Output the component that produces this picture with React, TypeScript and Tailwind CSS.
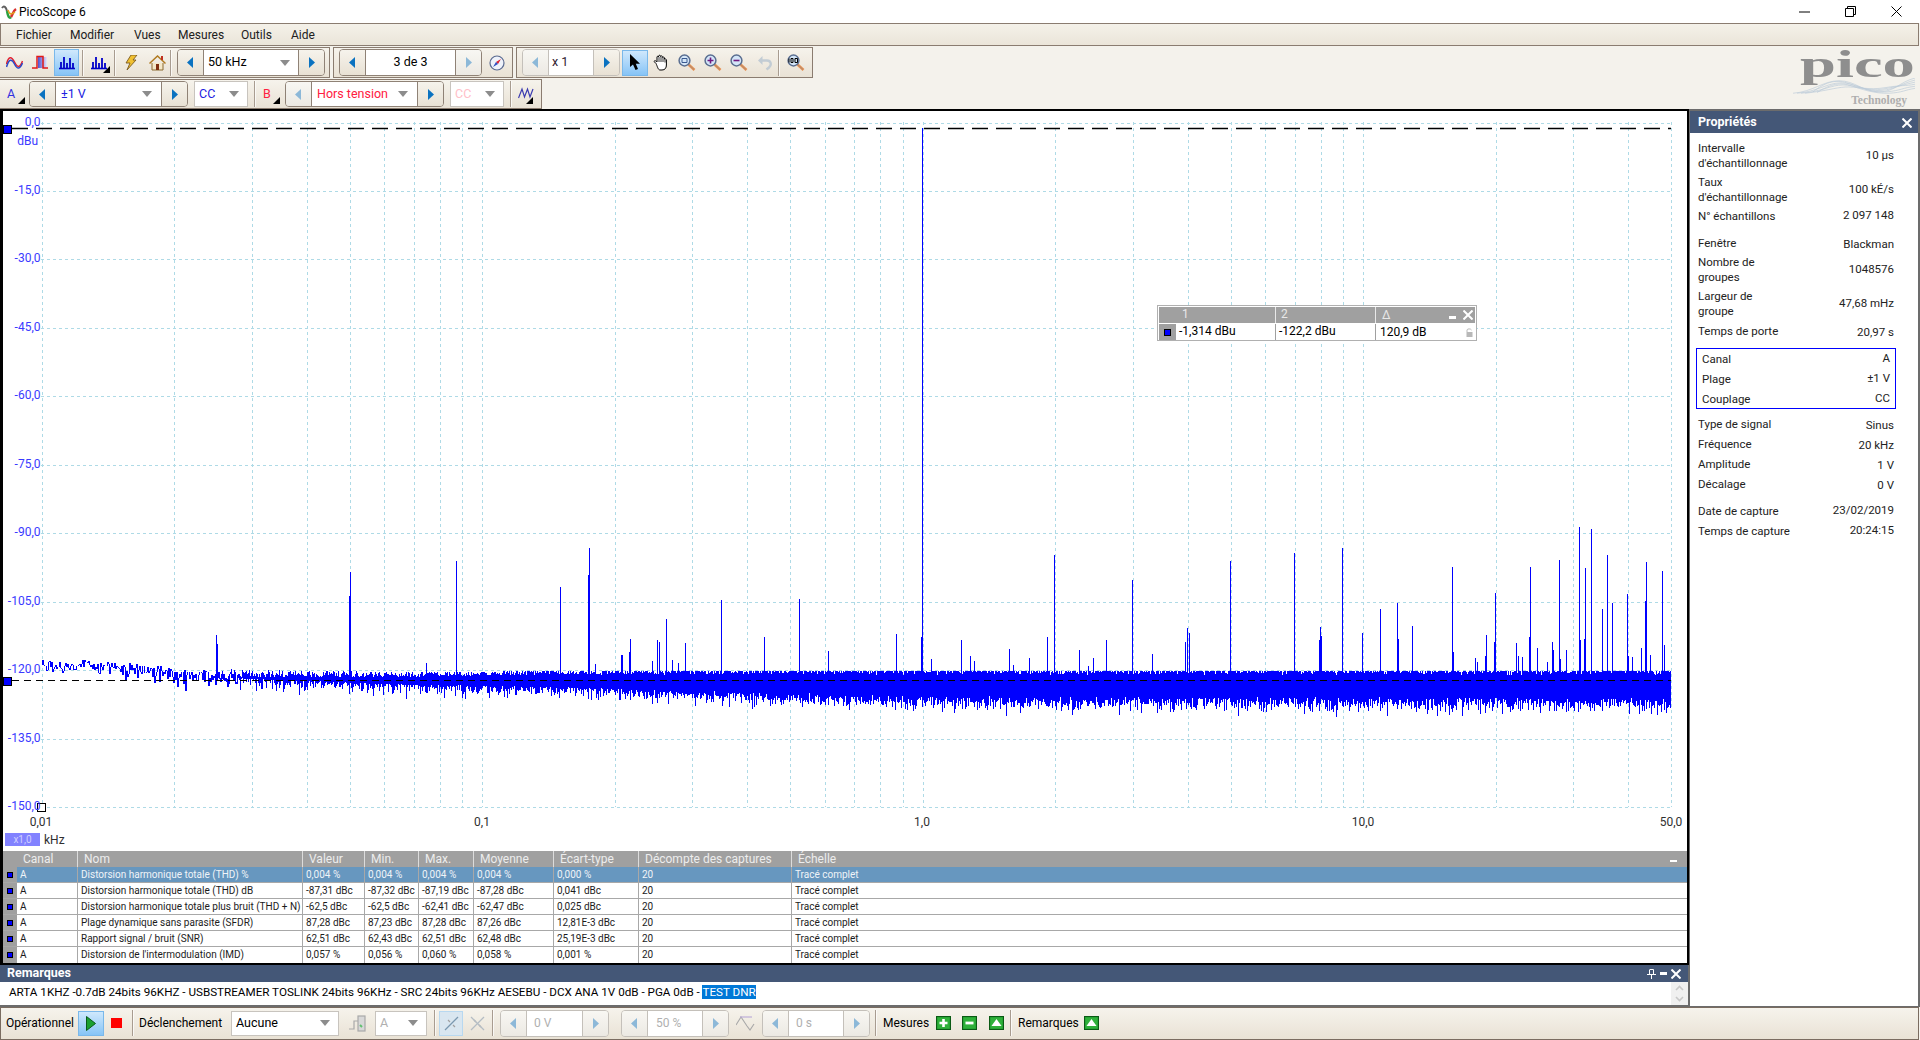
import React from "react";

/* ---------- chart data ---------- */
const lerp = (pts: number[][], x: number) => {
  if (x <= pts[0][0]) return pts[0][1];
  for (let i = 1; i < pts.length; i++) {
    if (x <= pts[i][0]) {
      const [a, b] = pts[i - 1];
      const [c, d] = pts[i];
      return b + ((d - b) * (x - a)) / (c - a);
    }
  }
  return pts[pts.length - 1][1];
};
let seed = 12345;
const rnd = () => {
  seed = (seed * 1664525 + 1013904223) % 4294967296;
  return seed / 4294967296;
};
const gauss = () => (rnd() + rnd() + rnd() + rnd() - 2) * 1.73;
const centre = [[42, 665], [100, 666], [130, 669], [200, 675], [250, 678], [400, 680], [560, 680], [750, 682], [1000, 684], [1670, 684]];
const sigma = [[42, 4], [200, 4.8], [250, 4.5], [400, 4.6], [560, 5], [750, 6.5], [920, 7.3], [1670, 7.6]];
const count = [[42, 1], [200, 1], [250, 3], [400, 8], [560, 20], [750, 35], [920, 45], [1670, 50]];
const minUp = [[250, 1], [400, 4], [560, 6.5], [750, 9], [920, 10], [1670, 11]];
const minDown = [[250, 1], [400, 5], [560, 8], [750, 12], [920, 14.5], [1670, 16]];
let noise = "";
let prev = 665;
for (let x = 42; x <= 1670; x++) {
  const c = lerp(centre, x);
  const s = lerp(sigma, x);
  const n = Math.round(lerp(count, x));
  let lo = prev;
  let hi = prev;
  let last = prev;
  if (n > 2) {
    lo = c - lerp(minUp, x) * (0.8 + 0.2 * rnd());
    hi = c + lerp(minDown, x) * (0.85 + 0.15 * rnd());
  }
  for (let i = 0; i < n; i++) {
    let u = gauss();
    if (u < 0) u = Math.max(u * 0.85, -1.75);
    else u = u * (1 + u * 0.12);
    last = c + u * s;
    lo = Math.min(lo, last);
    hi = Math.max(hi, last);
  }
  noise += `M${x}.5 ${Math.round(lo)}V${Math.round(hi)}`;
  prev = last;
}
const spikes = [
  [216, 635], [217, 644], [349, 596], [350, 572], [456, 561], [560, 587], [588, 575], [589, 548], [622, 655], [621, 655],
  [630, 639], [629, 652], [657, 640], [659, 642], [666, 619], [685, 643], [721, 600], [595, 664], [426, 663], [672, 660], [678, 663], [652, 661],
  [764, 637], [799, 599], [828, 651], [896, 634], [921, 637], [922, 128], [931, 659], [961, 640], [970, 656], [974, 661], [1009, 649],
  [1013, 665], [1029, 658], [1047, 637], [1054, 555], [1079, 650], [1088, 666], [1093, 658], [1106, 640], [1132, 580], [1152, 654], [1185, 642],
  [1187, 628], [1189, 633], [1230, 561], [1294, 553],
  [1320, 627], [1319, 640], [1321, 636], [1342, 548], [1362, 633], [1380, 609], [1397, 603], [1398, 639], [1412, 626], [1452, 567], [1453, 652],
  [1475, 658], [1477, 662], [1486, 635], [1485, 656], [1495, 593], [1494, 642], [1516, 643], [1518, 656], [1522, 657], [1530, 567], [1529, 637],
  [1537, 648], [1547, 662], [1552, 642], [1553, 650], [1559, 560], [1560, 659], [1566, 650], [1579, 527], [1580, 640], [1585, 568], [1584, 639],
  [1591, 529], [1602, 609], [1607, 555], [1612, 603], [1627, 594], [1628, 656], [1632, 657], [1641, 648], [1646, 562], [1645, 601], [1650, 655],
  [1662, 571], [1664, 645],
];
const spikePath = spikes.map(([x, y]) => `M${x}.5 ${y}V680`).join("");
const logX = (f: number) => 41.7 + 440.5 * Math.log10(f / 0.01);
const vGrid: number[] = [];
for (const d of [0.01, 0.1, 1, 10]) {
  for (let m = 1; m < 10; m++) {
    const f = d * m;
    if (f <= 50.0001) vGrid.push(Math.round(logX(f)));
  }
}
const hVals = ["0,0", "-15,0", "-30,0", "-45,0", "-60,0", "-75,0", "-90,0", "-105,0", "-120,0", "-135,0", "-150,0"];
const hY = hVals.map((_, i) => Math.round(122.5 + i * 68.45));

/* ---------- small drawings ---------- */
const Tri = ({ left, off }: { left?: boolean; off?: boolean }) => (
  <svg width="7" height="11" viewBox="0 0 7 11">
    <path d={left ? "M6 0V11L0 5.5Z" : "M1 0V11L7 5.5Z"} fill={off ? "#8cb8d8" : "#0a72c0"} />
  </svg>
);
const Caret = () => (
  <svg width="10" height="6" viewBox="0 0 10 6">
    <path d="M0 0H10L5 6Z" fill="#8c8c8c" />
  </svg>
);
const Corner = () => (
  <svg width="7" height="7" viewBox="0 0 7 7" className="shrink-0">
    <path d="M7 0V7H0Z" fill="#000" />
  </svg>
);
const Sep = () => <div className="w-[2px] h-[26px] border-l border-[#a89c90] bg-white/70 shrink-0" />;

const StepBtn = ({ left, off }: { left?: boolean; off?: boolean }) => (
  <div className={`w-[25px] shrink-0 flex items-center justify-center bg-linear-to-b ${off ? "from-[#f8f7f3] to-[#ece9e3]" : "from-[#f6f3ec] to-[#e8e1d4]"}`}>
    <Tri left={left} off={off} />
  </div>
);

const Sine = () => (
  <svg width="17" height="13" viewBox="0 0 17 13" fill="none" strokeWidth="1.5">
    <path d="M0.5 8C2.5 0 5.5 0 8.5 6S14 12 16.5 5" stroke="#e02030" />
    <path d="M0.5 11C3 3 5.5 2 8.5 8S14 13 16.5 7" stroke="#2848c8" />
  </svg>
);
const Pulse = () => (
  <svg width="18" height="15" viewBox="0 0 18 15" fill="none">
    <rect x="6" y="2" width="9" height="11" fill="url(#pg)" />
    <defs>
      <linearGradient id="pg" x1="0" x2="1" y1="0" y2="0">
        <stop offset="0" stopColor="#5050d0" />
        <stop offset="1" stopColor="#e8e8f8" />
      </linearGradient>
    </defs>
    <path d="M0 13H5V1.5H11V13H16" stroke="#e01818" strokeWidth="1.5" />
  </svg>
);
const Bars = ({ color = "#0000c8" }: { color?: string }) => (
  <svg width="16" height="15" viewBox="0 0 16 15">
    <path d="M0 13.5H16" stroke={color} strokeWidth="1.6" />
    <path d="M2 13V7M5 13V2M8 13V8M11 13V3M14 13V8" stroke={color} strokeWidth="1.8" />
  </svg>
);
const Bolt = () => (
  <svg width="14" height="16" viewBox="0 0 14 16">
    <path d="M7 0H13L9 5H12L3 15L6 8H2Z" fill="#f0c030" stroke="#7a5a20" strokeWidth="0.9" />
  </svg>
);
const Home = () => (
  <svg width="17" height="16" viewBox="0 0 17 16">
    <path d="M3 8V15H14V8" fill="#f4e8c8" stroke="#8a6a30" />
    <path d="M0.5 8.5L8.5 1L16.5 8.5" fill="none" stroke="#b07a20" strokeWidth="1.5" />
    <rect x="12" y="1" width="2" height="4" fill="#c03020" />
    <rect x="7" y="9" width="3" height="6" fill="#803010" />
  </svg>
);
const Compass = () => (
  <svg width="16" height="16" viewBox="0 0 16 16">
    <circle cx="8" cy="8" r="7" fill="#eef2fa" stroke="#5a6a90" strokeWidth="1.2" />
    <path d="M12 4L9 9L7 7Z" fill="#e02030" />
    <path d="M4 12L7 7L9 9Z" fill="#3050c0" />
  </svg>
);
const Arrow = () => (
  <svg width="12" height="17" viewBox="0 0 12 17">
    <path d="M1 0V13L4 10.5L6.5 16L9 15L6.8 9.8H11Z" fill="#000" />
  </svg>
);
const Hand = () => (
  <svg width="17" height="17" viewBox="0 0 17 17">
    <path
      d="M3 9.5L1 7.5C2 6 3 7 4 8V3C4 2 5.5 2 5.6 3V2C5.8 1 7.4 1 7.5 2V2.5C7.8 1.6 9.4 1.6 9.5 3V3.5C10 2.8 11.4 3 11.5 4V5.3C12.2 4.7 13.4 5 13.4 6V11C13.4 14 12 16 9 16H7C5 16 4.3 12 3 9.5Z"
      fill="#fff"
      stroke="#000"
      strokeWidth="1"
    />
    <path d="M6 3V8M8 3V8M10 4V8M12 6V8.5" stroke="#000" strokeWidth="0.8" />
  </svg>
);
const Mag = ({ glyph, off }: { glyph: "fit" | "plus" | "minus" | "100"; off?: boolean }) => (
  <svg width="18" height="17" viewBox="0 0 18 17" fill="none">
    <path d="M10.5 10.5L16.5 16" stroke="#e89050" strokeWidth="2.6" />
    <path d="M10.5 10.5L16 15.5" stroke="#8a8a8a" strokeWidth="0.7" />
    <circle cx="6.5" cy="6.5" r="5.4" fill="#d4e6f8" stroke={off ? "#a0a0a0" : "#5a6e90"} strokeWidth="1.5" />
    {glyph === "plus" && <path d="M3.5 6.5H9.5M6.5 3.5V9.5" stroke="#701880" strokeWidth="1.6" />}
    {glyph === "minus" && <path d="M3.5 6.5H9.5" stroke="#701880" strokeWidth="1.6" />}
    {glyph === "fit" && <path d="M4 4.5H9V8.5H4Z" stroke="#3a5a90" strokeWidth="1" />}
    {glyph === "100" && <path d="M2 4.5V8.5M4 4.5H6V8.5H4ZM8 4.5H10.5V8.5H8Z" stroke="#000" strokeWidth="1" />}
  </svg>
);
const Undo = () => (
  <svg width="16" height="16" viewBox="0 0 16 16" fill="none">
    <path d="M4 5.5H10C14 5.5 15 10 12 12.5L9.5 14.5" stroke="#c2ccd4" strokeWidth="2.4" />
    <path d="M5.5 1L1 5.5L5.5 10Z" fill="#c2ccd4" />
  </svg>
);
const Waves = () => (
  <svg width="17" height="15" viewBox="0 0 17 15" fill="none">
    <path d="M0.5 11L4 2L6.5 10L9.5 2L12 10L15 2" stroke="#3a3ab0" strokeWidth="1.2" />
  </svg>
);
const Sq = ({ glyph }: { glyph: "plus" | "minus" | "up" }) => (
  <svg width="15" height="14" viewBox="0 0 15 14">
    <rect x="0.5" y="0.5" width="14" height="13" fill="#1f9a2c" stroke="#0a5a14" />
    <rect x="1.5" y="1.5" width="12" height="11" fill="#2fb03a" />
    {glyph === "plus" && <path d="M3.5 7H11.5M7.5 3V11" stroke="#fff" strokeWidth="2.6" />}
    {glyph === "minus" && <path d="M3.5 7H11.5" stroke="#fff" strokeWidth="2.8" />}
    {glyph === "up" && <path d="M7.5 3L12.5 10H2.5Z" fill="#fff" />}
  </svg>
);
const Play = () => (
  <svg width="10" height="15" viewBox="0 0 10 15">
    <path d="M0.5 0.5L9.5 7.5L0.5 14.5Z" fill="#1aa030" stroke="#0a5a18" />
  </svg>
);
const TrigIcon = () => (
  <svg width="17" height="17" viewBox="0 0 17 17" fill="none" stroke="#a9a9a9" strokeWidth="1.2">
    <path d="M0 14H5V6H9" />
    <rect x="9" y="1" width="7" height="15" fill="#d8d8d8" />
    <path d="M11 10L13 12" stroke="#60c070" strokeWidth="2" />
  </svg>
);
const Cross1 = ({ dim }: { dim?: boolean }) => (
  <svg width="15" height="15" viewBox="0 0 15 15" fill="none" stroke={dim ? "#b4bcc4" : "#7a98b0"} strokeWidth="1.2">
    <path d="M1 14L14 1" />
    <path d="M4 4L6 6M9 9L11 11" stroke="#a0a0a0" />
    {dim && <path d="M1 1L14 14" />}
  </svg>
);
const SigIcon = () => (
  <svg width="19" height="17" viewBox="0 0 19 17" fill="none" stroke="#a8a8a8" strokeWidth="1.1">
    <path d="M0 10L5 2L11 11L14 15L18 9" />
    <path d="M4 2H16" stroke="#b8a8d8" />
  </svg>
);
const CloseX = ({ s = 10 }: { s?: number }) => (
  <svg width={s} height={s} viewBox="0 0 10 10" stroke="#fff" strokeWidth="2">
    <path d="M0.5 0.5L9.5 9.5M9.5 0.5L0.5 9.5" />
  </svg>
);

/* ---------- shared bits ---------- */
const Stepper = ({
  w,
  h,
  leftOff,
  rightOff,
  children,
  off,
}: {
  w: string;
  h: string;
  leftOff?: boolean;
  rightOff?: boolean;
  off?: boolean;
  children: React.ReactNode;
}) => (
  <div className={`flex shrink-0 rounded-[4px] border overflow-hidden ${w} ${h} ${off ? "border-[#c4c0ba]" : "border-[#8f8276]"}`}>
    <StepBtn left off={leftOff} />
    <div className={`flex-1 min-w-0 bg-white flex items-center border-x ${off ? "border-[#c4c0ba]" : "border-[#8f8276]"}`}>{children}</div>
    <StepBtn off={rightOff} />
  </div>
);
const Slot = ({ w, children }: { w: string; children: React.ReactNode }) => (
  <div className={`${w} shrink-0 flex items-center justify-center`}>{children}</div>
);
const Group = ({ className, children }: { className: string; children: React.ReactNode }) => (
  <div className={`flex items-center border border-[#8a7c70] bg-linear-to-b from-[#f6f3ec] to-[#e9e2d5] ${className}`}>{children}</div>
);

const Row = ({
  l,
  v,
  two,
  cls = "",
  drop = false,
}: {
  l: React.ReactNode;
  v: string;
  two?: boolean;
  cls?: string;
  drop?: boolean;
}) => (
  <div className={`flex justify-between items-center ${two ? "h-[30px]" : "h-[16px]"} ${cls}`}>
    <span className="leading-[15px]">{l}</span>
    <span className={drop ? "pt-[3px]" : ""}>{v}</span>
  </div>
);

const columns = "grid grid-cols-[14px_60px_225px_62px_54px_55px_80px_85px_153px_1fr]";
const headers = ["Canal", "Nom", "Valeur", "Min.", "Max.", "Moyenne", "Écart-type", "Décompte des captures", "Échelle"];
const rows = [
  ["A", "Distorsion harmonique totale (THD) %", "0,004 %", "0,004 %", "0,004 %", "0,004 %", "0,000 %", "20", "Tracé complet"],
  ["A", "Distorsion harmonique totale (THD) dB", "-87,31 dBc", "-87,32 dBc", "-87,19 dBc", "-87,28 dBc", "0,041 dBc", "20", "Tracé complet"],
  ["A", "Distorsion harmonique totale plus bruit (THD + N)", "-62,5 dBc", "-62,5 dBc", "-62,41 dBc", "-62,47 dBc", "0,025 dBc", "20", "Tracé complet"],
  ["A", "Plage dynamique sans parasite (SFDR)", "87,28 dBc", "87,23 dBc", "87,28 dBc", "87,26 dBc", "12,81E-3 dBc", "20", "Tracé complet"],
  ["A", "Rapport signal / bruit (SNR)", "62,51 dBc", "62,43 dBc", "62,51 dBc", "62,48 dBc", "25,19E-3 dBc", "20", "Tracé complet"],
  ["A", "Distorsion de l'intermodulation (IMD)", "0,057 %", "0,056 %", "0,060 %", "0,058 %", "0,001 %", "20", "Tracé complet"],
];

/* ---------- page ---------- */
export default function App() {
  return (
    <div className="w-[1920px] h-[1040px] flex flex-col overflow-hidden bg-[#f4f2ec] text-[#1c1c1c] text-[11.5px] [font-family:Roboto,sans-serif]">
      {/* title bar */}
      <div className="h-[23px] shrink-0 bg-white flex items-center">
        <svg width="16" height="16" viewBox="0 0 16 16" className="ml-[1px]">
          <path d="M1 4C3 1 5 3 6 7" fill="none" stroke="#606060" strokeWidth="2" />
          <path d="M6 7C7 12 8 15 10 13" fill="none" stroke="#2aa040" strokeWidth="2.5" />
          <path d="M10 13C12 10 12 7 15 5" fill="none" stroke="#d83030" strokeWidth="2.5" />
          <path d="M7 6C9 12 11 10 14 8" fill="none" stroke="#e0a020" strokeWidth="1.5" />
        </svg>
        <span className="ml-[2px] text-[12px] text-black">PicoScope 6</span>
        <div className="ml-auto flex pr-[1px]">
          <div className="w-[46px] h-[21px] flex items-center justify-center">
            <svg width="11" height="2"><path d="M0 1H11" stroke="#000" strokeWidth="1" /></svg>
          </div>
          <div className="w-[46px] h-[21px] flex items-center justify-center">
            <svg width="11" height="11" fill="none" stroke="#000"><path d="M0.5 2.5H8.5V10.5H0.5ZM2.5 2.5V0.5H10.5V8.5H8.5" /></svg>
          </div>
          <div className="w-[46px] h-[21px] flex items-center justify-center">
            <svg width="11" height="11" stroke="#000"><path d="M0.5 0.5L10.5 10.5M10.5 0.5L0.5 10.5" /></svg>
          </div>
        </div>
      </div>

      {/* menu */}
      <div className="h-[23px] shrink-0 mr-[1px] flex items-center border border-[#8a7c70] bg-linear-to-b from-[#f4f1e9] to-[#ebe5d9] text-[12px] text-[#202020]">
        <span className="ml-[15px] w-[54px]">Fichier</span>
        <span className="w-[64px]">Modifier</span>
        <span className="w-[44px]">Vues</span>
        <span className="w-[63px]">Mesures</span>
        <span className="w-[50px]">Outils</span>
        <span>Aide</span>
      </div>

      {/* toolbars + logo */}
      <div className="h-[63px] shrink-0 flex">
        <div className="flex flex-col pt-[1px] gap-[1px] text-[12.5px]">
          <div className="flex gap-[3px] h-[31px]">
            <Group className="w-[330px] border-l-0 pl-[1px]">
              <Slot w="w-[27px]"><Sine /></Slot>
              <Slot w="w-[26px]"><Pulse /></Slot>
              <div className="w-[25px] h-[27px] shrink-0 flex items-center justify-center border border-[#7ab8ea] bg-linear-to-b from-[#cfe8fc] to-[#86c4f6]"><Bars /></div>
              <div className="w-[3px]" />
              <Sep />
              <div className="w-[30px] h-[26px] flex items-center justify-center relative">
                <Bars />
                <div className="absolute right-[4px] bottom-[3px]"><Corner /></div>
              </div>
              <Sep />
              <div className="w-[1px]" />
              <Slot w="w-[27px]"><Bolt /></Slot>
              <Slot w="w-[26px]"><Home /></Slot>
              <Sep />
              <div className="w-[5px]" />
              <Stepper w="w-[148px]" h="h-[27px]">
                <span className="ml-[4px] text-black">50 kHz</span>
                <span className="ml-auto mr-[8px] flex"><Caret /></span>
              </Stepper>
            </Group>
            <Group className="w-[180px] pl-[5px]">
              <Stepper w="w-[143px]" h="h-[27px]" rightOff>
                <span className="w-full text-center text-black">3 de 3</span>
              </Stepper>
              <Slot w="w-[30px]"><Compass /></Slot>
            </Group>
            <Group className="w-[297px] pl-[5px]">
              <Stepper w="w-[98px]" h="h-[27px]" leftOff off>
                <span className="ml-[3px] text-[#302030]">x 1</span>
              </Stepper>
              <div className="w-[3px]" />
              <div className="w-[26px] h-[26px] shrink-0 flex items-center justify-center border border-[#7ab8ea] bg-linear-to-b from-[#cfe8fc] to-[#86c4f6]"><Arrow /></div>
              <Slot w="w-[26px]"><Hand /></Slot>
              <Slot w="w-[26px]"><Mag glyph="fit" /></Slot>
              <Slot w="w-[26px]"><Mag glyph="plus" /></Slot>
              <Slot w="w-[26px]"><Mag glyph="minus" /></Slot>
              <Slot w="w-[26px]"><Undo /></Slot>
              <Sep />
              <Slot w="w-[32px]"><Mag glyph="100" /></Slot>
            </Group>
          </div>
          <Group className="w-[542px] h-[30px] border-l-0">
            <div className="w-[29px] h-full flex items-center shrink-0 relative">
              <span className="ml-[7px] text-[#3030e0]">A</span>
              <div className="absolute right-[4px] bottom-[4px]"><Corner /></div>
            </div>
            <Stepper w="w-[159px]" h="h-[26px]">
              <span className="ml-[5px] text-[#2020e0]">±1 V</span>
              <span className="ml-auto mr-[9px] flex"><Caret /></span>
            </Stepper>
            <div className="w-[6px]" />
            <div className="w-[54px] h-[26px] shrink-0 flex items-center bg-white border border-[#c8c4be]">
              <span className="ml-[4px] text-[#2020e0]">CC</span>
              <span className="ml-auto mr-[8px] flex"><Caret /></span>
            </div>
            <div className="w-[6px]" />
            <Sep />
            <div className="w-[29px] h-full flex items-center shrink-0 relative">
              <span className="ml-[7px] text-[#ff2040]">B</span>
              <div className="absolute right-[5px] bottom-[4px]"><Corner /></div>
            </div>
            <Stepper w="w-[159px]" h="h-[26px]" leftOff>
              <span className="ml-[5px] text-[#ff2040]">Hors tension</span>
              <span className="ml-auto mr-[9px] flex"><Caret /></span>
            </Stepper>
            <div className="w-[6px]" />
            <div className="w-[54px] h-[26px] shrink-0 flex items-center bg-white border border-[#c8c4be]">
              <span className="ml-[4px] text-[#ffc0c8]">CC</span>
              <span className="ml-auto mr-[8px] flex"><Caret /></span>
            </div>
            <div className="w-[6px]" />
            <Sep />
            <div className="flex-1 h-full relative flex items-center justify-center">
              <Waves />
              <div className="absolute right-[8px] bottom-[4px]"><Corner /></div>
            </div>
          </Group>
        </div>
        {/* logo */}
        <div className="ml-auto w-[127px] h-[62px] relative">
          <svg width="122" height="18" viewBox="0 0 122 26" preserveAspectRatio="none" className="absolute left-0 top-[32px]" fill="none" stroke="#bccbd8" strokeWidth="0.8">
            <path d="M0 22C20 20 30 4 46 4S70 20 86 20S106 6 122 0" />
            <path d="M4 22C24 20 34 7 48 7S72 20 88 18S108 8 122 3" />
            <path d="M8 22C28 20 38 10 50 10S74 20 90 16S110 10 122 6" />
            <path d="M12 22C32 19 42 14 52 13S76 18 92 14S112 12 122 9" />
            <path d="M20 20C34 4 44 2 56 8S80 22 94 20S110 14 122 12" />
            <path d="M24 21C38 8 48 6 58 11S82 23 96 22S112 17 122 15" />
          </svg>
          <span className="absolute left-[7px] top-[-1px] origin-left [transform:scaleX(1.7)] [font-family:'Liberation_Serif',serif] font-bold text-[38px] leading-[38px] text-[#8e8e8e]">pico</span>
          <span className="absolute right-[13px] top-[47px] [font-family:'Liberation_Serif',serif] font-bold text-[11.5px] leading-[14px] text-[#aeaeae]">Technology</span>
        </div>
      </div>

      {/* main */}
      <div className="flex-1 min-h-0 flex bg-[#6c6c6c]">
        <div className="w-[1689px] shrink-0 flex flex-col">
          <div className="flex-1 min-h-0 flex flex-col border-l-[3px] border-t-[2px] border-r-[2px] border-b-[3px] border-black bg-white">
            {/* chart */}
            <div className="relative flex-1 min-h-0 bg-white overflow-hidden">
              <svg width="1684" height="740" viewBox="3 111 1684 740" className="block">
                <g stroke="#aedae6" strokeWidth="1" strokeDasharray="3 3" shapeRendering="crispEdges">
                  {vGrid.map((x) => (
                    <path key={x} d={`M${x}.5 122V807`} />
                  ))}
                  {hY.map((y) => (
                    <path key={y} d={`M41 ${y}.5H1671`} />
                  ))}
                </g>
                <path d={noise} stroke="#0000ff" strokeWidth="1" fill="none" shapeRendering="crispEdges" />
                <path d={spikePath} stroke="#0000ff" strokeWidth="1" fill="none" shapeRendering="crispEdges" />
                <path d="M12 128.5H1671" stroke="#000" strokeWidth="1.5" strokeDasharray="16 8" fill="none" />
                <path d="M12 680.5H1671" stroke="#000" strokeWidth="1" strokeDasharray="7 5" fill="none" />
                <rect x="3.5" y="125.5" width="8" height="8" fill="#0000ff" stroke="#000" />
                <rect x="3.5" y="677.5" width="8" height="8" fill="#0000ff" stroke="#000" />
                <rect x="37.5" y="803.5" width="8" height="8" fill="#fff" stroke="#000" />
                <g fill="#3a3aff" fontSize="12" textAnchor="end">
                  {hVals.map((t, i) => (
                    <text key={t} x="40.5" y={hY[i] + 3}>{t}</text>
                  ))}
                  <text x="38" y="145">dBu</text>
                </g>
                <g fill="#303030" fontSize="12" textAnchor="middle">
                  <text x="41" y="825.5">0,01</text>
                  <text x="482" y="825.5">0,1</text>
                  <text x="922" y="825.5">1,0</text>
                  <text x="1363" y="825.5">10,0</text>
                  <text x="1671" y="825.5">50,0</text>
                </g>
                <rect x="5" y="833" width="35" height="13" fill="#8282ff" />
                <text x="22.5" y="843" fill="#d0d0ff" fontSize="10" textAnchor="middle">x1,0</text>
                <text x="44" y="843.5" fill="#303030" fontSize="12">kHz</text>
              </svg>
              {/* floating ruler legend */}
              <div className="absolute left-[1154px] top-[194px] w-[320px] h-[36px] border border-[#b0b0b0] bg-white p-[1px] text-[12px]">
                <div className="h-[16px] bg-[#a0a0a0] grid grid-cols-[17px_99px_100px_1fr] text-[#e8e8e8] leading-[15px]">
                  <div />
                  <div className="pl-[6px]">1</div>
                  <div className="pl-[5px] border-l border-[#e8e8e8]">2</div>
                  <div className="pl-[6px] border-l border-[#e8e8e8] flex items-center">
                    <span>Δ</span>
                    <svg width="8" height="4" className="ml-auto mr-[6px] mt-[6px]"><rect width="7" height="3" fill="#fff" /></svg>
                    <span className="mr-[2px] flex"><CloseX /></span>
                  </div>
                </div>
                <div className="h-[16px] mt-[1px] grid grid-cols-[17px_99px_100px_1fr] leading-[15px] text-black">
                  <div className="bg-[#a0a0a0] flex items-center justify-center">
                    <div className="w-[7px] h-[7px] bg-[#0000ff] border border-black" />
                  </div>
                  <div className="pl-[3px]">-1,314 dBu</div>
                  <div className="pl-[3px] border-l border-[#a0a0a0]">-122,2 dBu</div>
                  <div className="pl-[4px] border-l border-[#a0a0a0] flex items-center">
                    <span>120,9 dB</span>
                    <svg width="7" height="9" viewBox="0 0 7 9" className="ml-auto mr-[2px]" fill="none">
                      <path d="M1 4V2C1 0.5 5 0.5 5.5 2" stroke="#b8b8b8" />
                      <rect x="0.5" y="4" width="6" height="5" fill="#b8b8b8" />
                    </svg>
                  </div>
                </div>
              </div>
            </div>
            {/* table */}
            <div className="h-[111px] shrink-0 bg-[#a0a0a0] relative text-[10px]">
              <div className={`${columns} h-[16px] text-[12px] text-[#ededed] leading-[16px]`}>
                <div />
                {headers.map((h, i) => (
                  <div key={h} className={`pl-[6px] whitespace-nowrap ${i > 0 ? "border-l border-[#dcdcdc]" : ""}`}>{h}</div>
                ))}
              </div>
              <svg width="7" height="3" className="absolute right-[10px] top-[9px]"><rect width="7" height="2" fill="#fff" /></svg>
              {rows.map((r, ri) => (
                <div key={r[1]} className={`${columns} h-[16px] leading-[15px] ${ri === 0 ? "bg-[#6797bf] text-[#f0f4f8]" : "bg-white text-[#1c1c1c]"} ${ri < 5 ? "border-b border-[#a8a8a8]" : ""}`}>
                  <div className="bg-[#a0a0a0] flex items-center justify-center">
                    <div className="w-[6px] h-[6px] bg-[#0000ff] border border-black" />
                  </div>
                  {r.map((c, i) => (
                    <div key={i} className={`pl-[3px] whitespace-nowrap overflow-hidden ${i > 0 ? "border-l border-[#a8a8a8]" : ""}`}>{c}</div>
                  ))}
                </div>
              ))}
            </div>
          </div>
          {/* remarks */}
          <div className="h-[42px] shrink-0 mr-[1px] flex flex-col">
            <div className="h-[17px] shrink-0 bg-[#445777] flex items-center px-[7px] text-white font-bold text-[12.5px]">
              <span>Remarques</span>
              <span className="ml-auto flex items-center gap-[4px]">
                <svg width="9" height="10" viewBox="0 0 9 10" fill="none" stroke="#fff"><path d="M2.5 0.5H6.5V5M0 5.5H9M4.5 6V10M2.5 1V5" /></svg>
                <svg width="7" height="3"><rect width="7" height="3" fill="#fff" /></svg>
                <CloseX />
              </span>
            </div>
            <div className="flex-1 min-h-0 bg-white flex border-b-2 border-[#6c6c6c]">
              <div className="flex-1 pl-[9px] pt-[1px] text-[11.66px] leading-[18px] text-black whitespace-nowrap">
                ARTA 1KHZ -0.7dB 24bits 96KHZ - USBSTREAMER TOSLINK 24bits 96KHz - SRC 24bits 96KHz AESEBU - DCX ANA 1V 0dB - PGA 0dB - <span className="bg-[#0078d7] text-white">TEST DNR</span>
              </div>
              <div className="w-[17px] bg-[#f0f0f0] flex flex-col items-center justify-between py-[3px]">
                <svg width="9" height="6" fill="none" stroke="#c8c8c8" strokeWidth="1.6"><path d="M1 5L4.5 1.5L8 5" /></svg>
                <svg width="9" height="6" fill="none" stroke="#c8c8c8" strokeWidth="1.6"><path d="M1 1L4.5 4.5L8 1" /></svg>
              </div>
            </div>
          </div>
        </div>

        {/* properties */}
        <div className="w-[228px] ml-[1px] mt-[2px] mb-[1px] shrink-0 flex flex-col bg-white text-[11.5px] text-[#222]">
          <div className="h-[22px] shrink-0 bg-[#445777] flex items-center justify-between px-[8px] pt-[1px] text-white font-bold text-[12.5px]">
            <span>Propriétés</span>
            <span className="flex mr-[-2px]"><CloseX /></span>
          </div>
          <div className="pt-[8px] pl-[8px] pr-[24px] flex flex-col">
            <Row two l={<>Intervalle<br />d'échantillonnage</>} v="10 µs" />
            <Row two cls="mt-[4px]" l={<>Taux<br />d'échantillonnage</>} v="100 kÉ/s" />
            <Row cls="mt-[3px]" l="N° échantillons" v="2 097 148" />
            <Row cls="mt-[11px]" l="Fenêtre" v="Blackman" drop />
            <Row two cls="mt-[4px]" l={<>Nombre de<br />groupes</>} v="1048576" />
            <Row two cls="mt-[4px]" l={<>Largeur de<br />groupe</>} v="47,68 mHz" />
            <Row cls="mt-[4px]" l="Temps de porte" v="20,97 s" drop />
            <div className="mt-[9px] ml-[-2px] mr-[-2px] h-[61px] border border-[#0000ff] pt-[2px] px-[5px] flex flex-col gap-[4px]">
              <Row l="Canal" v="A" />
              <Row l="Plage" v="±1 V" />
              <Row l="Couplage" v="CC" />
            </div>
            <Row cls="mt-[7px]" l="Type de signal" v="Sinus" drop />
            <Row cls="mt-[4px]" l="Fréquence" v="20 kHz" drop />
            <Row cls="mt-[4px]" l="Amplitude" v="1 V" drop />
            <Row cls="mt-[4px]" l="Décalage" v="0 V" drop />
            <Row cls="mt-[11px]" l="Date de capture" v="23/02/2019" />
            <Row cls="mt-[4px]" l="Temps de capture" v="20:24:15" />
          </div>
        </div>
      </div>

      {/* bottom toolbar */}
      <div className="h-[33px] shrink-0 flex items-center pb-[1px] border border-[#7a6c60] bg-linear-to-b from-[#f6f3ec] to-[#e9e2d5] text-[12px] text-black mr-[1px]">
        <span className="ml-[5px] w-[68px] whitespace-nowrap">Opérationnel</span>
        <div className="ml-[4px] w-[26px] h-[25px] flex items-center justify-center border border-[#7ab8ea] bg-linear-to-b from-[#cfe8fc] to-[#86c4f6]"><Play /></div>
        <div className="ml-[7px] w-[11px] h-[10px] bg-[#ff0000]" />
        <div className="ml-[10px]"><Sep /></div>
        <span className="ml-[5px] w-[86px] whitespace-nowrap">Déclenchement</span>
        <div className="ml-[6px] w-[108px] h-[25px] flex items-center bg-white border border-[#c8c4be]">
          <span className="ml-[4px] text-[12.5px]">Aucune</span>
          <span className="ml-auto mr-[8px] flex"><Caret /></span>
        </div>
        <Slot w="w-[36px]"><TrigIcon /></Slot>
        <div className="w-[52px] h-[25px] flex items-center bg-white border border-[#c8c4be]">
          <span className="ml-[4px] text-[12.5px] text-[#b0b0b0]">A</span>
          <span className="ml-auto mr-[8px] flex"><Caret /></span>
        </div>
        <div className="ml-[7px]"><Sep /></div>
        <div className="ml-[3px] w-[24px] h-[25px] flex items-center justify-center border border-[#b8d8f0] bg-[#d9e6f0]"><Cross1 /></div>
        <Slot w="w-[28px]"><Cross1 dim /></Slot>
        <div className="ml-[1px]"><Sep /></div>
        <div className="ml-[6px]">
          <Stepper w="w-[109px]" h="h-[27px]" leftOff rightOff off>
            <span className="ml-[7px] text-[#b0b0b0]">0 V</span>
          </Stepper>
        </div>
        <div className="ml-[12px]">
          <Stepper w="w-[108px]" h="h-[27px]" leftOff rightOff off>
            <span className="ml-[8px] text-[#b0b0b0]">50 %</span>
          </Stepper>
        </div>
        <Slot w="w-[33px]"><SigIcon /></Slot>
        <Stepper w="w-[108px]" h="h-[27px]" leftOff rightOff off>
          <span className="ml-[7px] text-[#b0b0b0]">0 s</span>
        </Stepper>
        <div className="ml-[5px]"><Sep /></div>
        <span className="ml-[6px] w-[44px]">Mesures</span>
        <span className="ml-[9px] flex"><Sq glyph="plus" /></span>
        <span className="ml-[11px] flex"><Sq glyph="minus" /></span>
        <span className="ml-[12px] flex"><Sq glyph="up" /></span>
        <div className="ml-[6px]"><Sep /></div>
        <span className="ml-[6px] w-[60px]">Remarques</span>
        <span className="ml-[6px] flex"><Sq glyph="up" /></span>
      </div>
    </div>
  );
}
